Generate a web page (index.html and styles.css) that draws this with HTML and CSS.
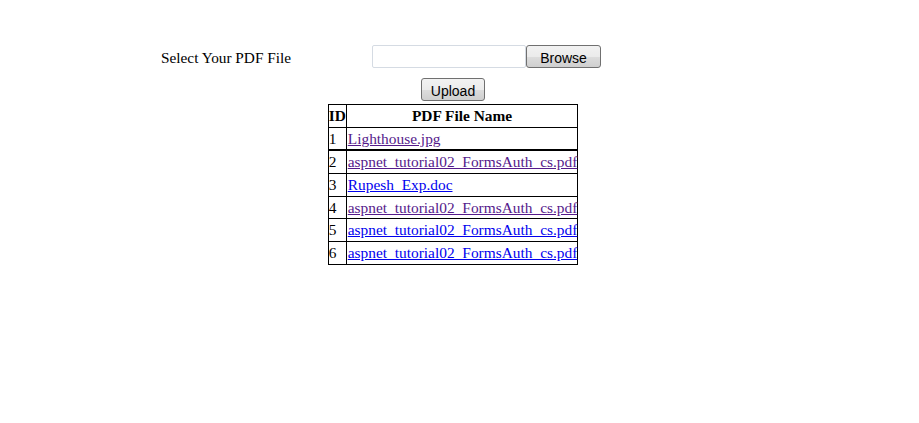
FILE: index.html
```html
<!DOCTYPE html>
<html>
<head>
<meta charset="utf-8">
<title>Upload PDF</title>
<link rel="stylesheet" href="styles.css">
</head>
<body>
<div class="page">
  <div class="select-row">
    <span class="select-label">Select Your PDF File</span>
    <div class="file-input">
      <span class="file-box"></span>
      <span class="btn btn-browse">Browse</span>
    </div>
  </div>
  <div class="center-row">
    <span class="btn btn-upload">Upload</span>
  </div>
  <div class="center-row">
    <table class="files">
      <tr><th class="id-col">ID</th><th>PDF File Name</th></tr>
      <tr class="short"><td>1</td><td><a class="visited" href="#">Lighthouse.jpg</a></td></tr>
      <tr class="thick"><td>2</td><td><a class="visited" href="#">aspnet_tutorial02_FormsAuth_cs.pdf</a></td></tr>
      <tr><td>3</td><td><a class="link" href="#">Rupesh_Exp.doc</a></td></tr>
      <tr class="short"><td>4</td><td><a class="visited" href="#">aspnet_tutorial02_FormsAuth_cs.pdf</a></td></tr>
      <tr><td>5</td><td><a class="link" href="#">aspnet_tutorial02_FormsAuth_cs.pdf</a></td></tr>
      <tr><td>6</td><td><a class="link" href="#">aspnet_tutorial02_FormsAuth_cs.pdf</a></td></tr>
    </table>
  </div>
</div>
</body>
</html>
```

FILE: styles.css
```css
html, body {
  margin: 0;
  padding: 0;
  background: #ffffff;
}
body {
  font-family: "Liberation Serif", "Times New Roman", serif;
  font-size: 16px;
  color: #000000;
}
.page {
  width: 906px;
  padding-top: 45px;
}
.select-row {
  display: flex;
  align-items: center;
  height: 23px;
  padding-left: 161px;
}
.select-label {
  width: 211px;
  font-size: 15.3px;
  line-height: 23px;
  padding-top: 2px;
}
.file-input {
  display: flex;
  height: 23px;
}
.file-box {
  box-sizing: border-box;
  width: 154px;
  height: 23px;
  border: 1px solid #d5dbe3;
  border-radius: 2px;
  background: #ffffff;
}
.btn {
  box-sizing: border-box;
  display: inline-flex;
  align-items: center;
  justify-content: center;
  height: 23px;
  border: 1px solid #707070;
  border-radius: 3px;
  background: linear-gradient(#f2f2f2 0%, #ebebeb 50%, #dddddd 51%, #cfcfcf 100%);
  font-family: "Liberation Sans", Arial, sans-serif;
  font-size: 14px;
  color: #000000;
  padding-top: 2px;
}
.btn-browse {
  width: 75px;
}
.btn-upload {
  width: 64px;
}
.center-row {
  display: flex;
  justify-content: center;
  margin-top: 10px;
}
.center-row + .center-row {
  margin-top: 3px;
}
.files {
  border-collapse: collapse;
  border: 1px solid #000000;
  font-size: 15.4px;
}
.files th,
.files td {
  border: 1px solid #000000;
  padding: 0;
  height: 22px;
  line-height: 22px;
  text-align: left;
  white-space: nowrap;
}
.files tr.short td {
  height: 21px;
  line-height: 21px;
}
.files th {
  text-align: center;
  font-weight: bold;
}
.files td:last-child {
  padding-left: 1px;
}
.files tr.thick td {
  border-top-width: 2px;
}
.visited {
  color: #551a8b;
}
.link {
  color: #0000ee;
}
```
